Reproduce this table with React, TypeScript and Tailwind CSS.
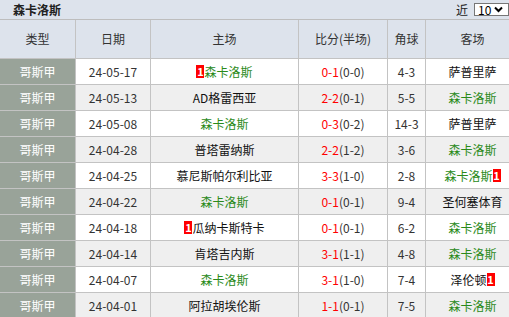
import React from "react";

type Row = {
  date: string;
  home: string;
  homeGreen?: boolean;
  homeBadge?: boolean;
  ft: string;
  ht: string;
  corner: string;
  away: string;
  awayGreen?: boolean;
  awayBadge?: boolean;
};

const rows: Row[] = [
  { date: "24-05-17", home: "森卡洛斯", homeGreen: true, homeBadge: true, ft: "0-1", ht: "(0-0)", corner: "4-3", away: "萨普里萨" },
  { date: "24-05-13", home: "AD格雷西亚", ft: "2-2", ht: "(0-1)", corner: "5-5", away: "森卡洛斯", awayGreen: true },
  { date: "24-05-08", home: "森卡洛斯", homeGreen: true, ft: "0-3", ht: "(0-2)", corner: "14-3", away: "萨普里萨" },
  { date: "24-04-28", home: "普塔雷纳斯", ft: "2-2", ht: "(1-2)", corner: "3-6", away: "森卡洛斯", awayGreen: true },
  { date: "24-04-25", home: "慕尼斯帕尔利比亚", ft: "3-3", ht: "(1-0)", corner: "2-8", away: "森卡洛斯", awayGreen: true, awayBadge: true },
  { date: "24-04-22", home: "森卡洛斯", homeGreen: true, ft: "0-1", ht: "(0-1)", corner: "9-4", away: "圣何塞体育" },
  { date: "24-04-18", home: "瓜纳卡斯特卡", homeBadge: true, ft: "0-1", ht: "(0-1)", corner: "6-2", away: "森卡洛斯", awayGreen: true },
  { date: "24-04-14", home: "肯塔吉内斯", ft: "3-1", ht: "(1-1)", corner: "4-8", away: "森卡洛斯", awayGreen: true },
  { date: "24-04-07", home: "森卡洛斯", homeGreen: true, ft: "3-1", ht: "(1-0)", corner: "7-4", away: "泽伦顿", awayBadge: true },
  { date: "24-04-01", home: "阿拉胡埃伦斯", ft: "1-1", ht: "(0-1)", corner: "7-5", away: "森卡洛斯", awayGreen: true },
];

const grid = "grid grid-cols-[76px_75px_148px_89px_38px_83px]";
const cell = "flex items-center justify-center border-r border-b border-[#c3c3c3]";

function Badge() {
  return (
    <span className="inline-flex h-[13px] w-[8px] items-center justify-center bg-[#ff0000] text-[11px] font-bold leading-none text-white">
      1
    </span>
  );
}

function Team({ name, green, badge, badgeRight }: { name: string; green?: boolean; badge?: boolean; badgeRight?: boolean }) {
  return (
    <span className="inline-flex items-center">
      {badge && !badgeRight && <Badge />}
      <span className={green ? "text-[#2a8a1a]" : "text-[#111]"}>{name}</span>
      {badge && badgeRight && <Badge />}
    </span>
  );
}

export default function App() {
  return (
    <div
      className="w-[509px] h-[317px] overflow-hidden bg-white text-[12px] text-[#333]"
      style={{ fontFamily: '"Noto Sans CJK SC", "Noto Sans", sans-serif' }}
    >
      <div className="flex h-[20px] items-center justify-between border-b border-[#bdbdbd] bg-[#dde3ec] pl-[13px] pr-0">
        <span className="text-[12px] font-bold text-[#222]">森卡洛斯</span>
        <div className="flex items-center gap-[6px]">
          <span className="text-[12px] text-[#222]">近</span>
          <div className="flex h-[13px] w-[35px] items-center border border-[#767676] bg-white pl-[3px] text-[12px] leading-none text-black">
            <span>10</span>
            <svg className="ml-[3px]" width="9" height="7" viewBox="0 0 9 7">
              <path d="M1 1.5 L4.5 5 L8 1.5" stroke="#000" strokeWidth="2" fill="none" />
            </svg>
          </div>
        </div>
      </div>
      <div className={`${grid} h-[39px] bg-[#dde3ec] text-[12px] text-[#333]`}>
        <div className={cell}>类型</div>
        <div className={cell}>日期</div>
        <div className={cell}>主场</div>
        <div className={cell}>比分(半场)</div>
        <div className={cell}>角球</div>
        <div className={`${cell} border-r-0 pl-[10px]`}>客场</div>
      </div>
      {rows.map((r, i) => {
        const bg = i % 2 === 0 ? "bg-white" : "bg-[#efefef]";
        return (
          <div key={i} className={`${grid} h-[26px] ${bg}`}>
            <div className={`${cell} bg-[#99a399] text-white`}>哥斯甲</div>
            <div className={cell}>{r.date}</div>
            <div className={cell}>
              <Team name={r.home} green={r.homeGreen} badge={r.homeBadge} />
            </div>
            <div className={cell}>
              <span className="text-[#ff0000]">{r.ft}</span>
              <span>{r.ht}</span>
            </div>
            <div className={cell}>{r.corner}</div>
            <div className={`${cell} border-r-0 pl-[10px]`}>
              <Team name={r.away} green={r.awayGreen} badge={r.awayBadge} badgeRight />
            </div>
          </div>
        );
      })}
    </div>
  );
}
